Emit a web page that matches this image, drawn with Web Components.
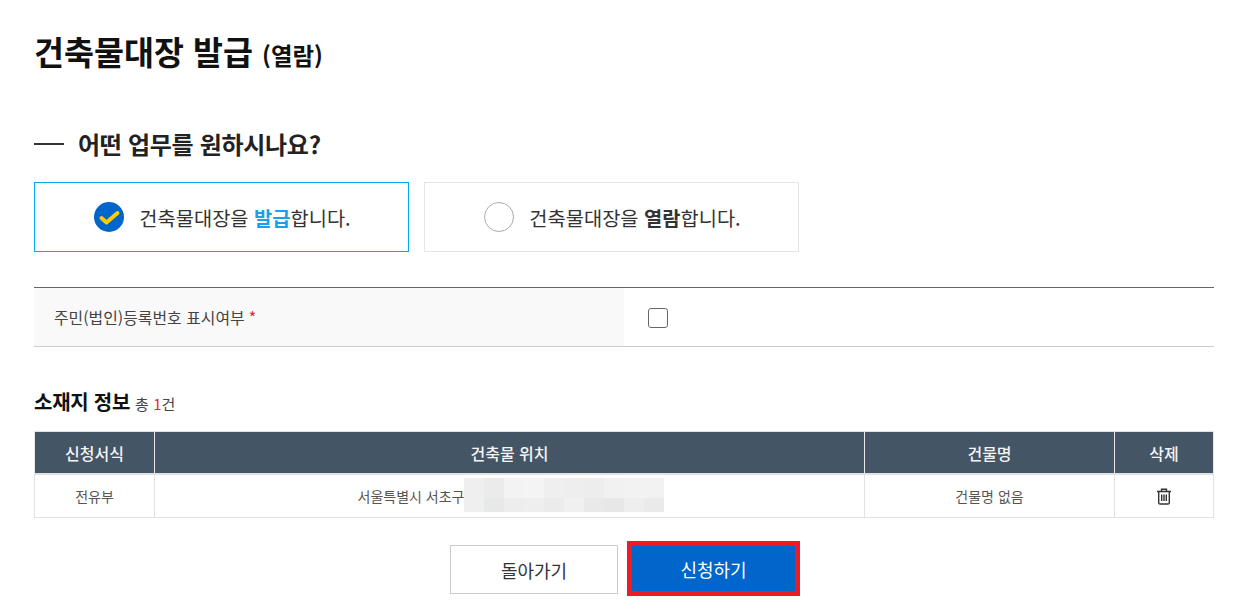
<!DOCTYPE html>
<html lang="ko">
<head>
<meta charset="utf-8">
<title>건축물대장 발급</title>
<style>
  html, body { margin: 0; background: #fff; }
  body {
    font-family: "Noto Sans CJK KR", "Noto Sans", sans-serif;
    color: #222;
  }
</style>
</head>
<body>
<issue-page></issue-page>

<script>
class PageTitle extends HTMLElement {
  constructor() {
    super()
    this.attachShadow({ mode: "open" })
    this.shadowRoot.innerHTML = `
      <style>
        :host { display: block; }
        h1 { margin: 0; font-size: 32.6px; line-height: 46px; font-weight: 700; color: #111; }
        small { font-size: 23.4px; font-weight: 700; }
      </style>
      <h1><slot></slot> <small><slot name="sub"></slot></small></h1>
    `
  }
}

class SectionHead extends HTMLElement {
  constructor() {
    super()
    this.attachShadow({ mode: "open" })
    this.shadowRoot.innerHTML = `
      <style>
        :host { display: flex; align-items: center; gap: 14px; }
        .dash { width: 30px; height: 2px; background: #333; }
        h2 { margin: 0; font-size: 24px; line-height: 34px; font-weight: 700; color: #222; letter-spacing: -.3px; }
      </style>
      <span class="dash"></span>
      <h2><slot></slot></h2>
    `
  }
}

class ChoiceCard extends HTMLElement {
  constructor() {
    super()
    this.attachShadow({ mode: "open" })
  }

  connectedCallback() {
    const checked = this.hasAttribute("checked")
    const mark = checked
      ? `<svg width="30" height="30" viewBox="0 0 30 30"><circle cx="15" cy="15" r="15" fill="#0066cc"/><path d="M7.5 16l5 4.5 11-9.5" fill="none" stroke="#ffcc00" stroke-width="4" stroke-linecap="round" stroke-linejoin="round"/></svg>`
      : `<svg width="30" height="30" viewBox="0 0 30 30"><circle cx="15" cy="15" r="14.5" fill="#fff" stroke="#aaa"/></svg>`
    this.shadowRoot.innerHTML = `
      <style>
        :host {
          display: flex; align-items: center; justify-content: center; gap: 15px;
          box-sizing: border-box; width: 375px; height: 70px; padding-left: 2px;
          border: 1px solid ${checked ? "#00aeef" : "#e5e5e5"};
          font-size: 19.8px; color: #333;
        }
        svg { display: block; }
        ::slotted(b) { font-weight: 700; color: ${checked ? "#1a9fe8" : "#333"}; }
      </style>
      ${mark}
      <span><slot></slot></span>
    `
  }
}

class FormRow extends HTMLElement {
  constructor() {
    super()
    this.attachShadow({ mode: "open" })
    this.shadowRoot.innerHTML = `
      <style>
        :host {
          display: grid; grid-template-columns: 590px 1fr;
          border-top: 1px solid #666; border-bottom: 1px solid #ccc;
          height: 58px;
        }
        .label {
          display: flex; align-items: center; padding-left: 20px;
          background: #f9f9f9; font-size: 15.9px; color: #444;
        }
        .req { color: #e8222e; margin-left: 4px; }
        .value { display: flex; align-items: center; padding: 2px 0 0 24px; }
        .box { box-sizing: border-box; width: 20px; height: 20px; border: 1px solid #666; border-radius: 3px; background: #fff; }
      </style>
      <div class="label"><slot></slot><span class="req">*</span></div>
      <div class="value"><span class="box"></span></div>
    `
  }
}

class SiteTable extends HTMLElement {
  constructor() {
    super()
    this.attachShadow({ mode: "open" })
    const cells = ["#efefef","#ebebeb","#f3f3f3","#f4f4f4","#efefef","#eeeeee","#ededed","#f1f1f1","#f2f2f2","#f2f2f2",
                   "#efefef","#e7e8e8","#ededed","#eeeeee","#ebebeb","#f0f0f0","#e9e9e9","#e7e7e7","#eeeeee","#eaeaea"]
    this.shadowRoot.innerHTML = `
      <style>
        :host { display: block; }
        .head { display: flex; align-items: baseline; gap: 5px; height: 29px; }
        h3 { margin: 0; font-size: 20px; line-height: 29px; font-weight: 700; color: #111; letter-spacing: -.25px; }
        .count { font-size: 15px; color: #444; }
        .count em { font-style: normal; color: #f01c2c; }
        table { border-collapse: collapse; table-layout: fixed; width: 1179px; margin-top: 15px; }
        th, td { border: 1px solid #e2e2e2; text-align: center; padding: 0; }
        th { height: 41px; background: #445566; color: #f4f4f4; font-size: 16px; font-weight: 500; border-right-color: #e8e8e8; border-left-color: #e8e8e8; border-bottom: 2px solid #e2e2e2; }
        td { height: 42px; font-size: 14px; color: #555; }
        td.place { padding-left: 3px; }
        .addr { display: inline-flex; align-items: center; vertical-align: middle; }
        .mask { display: grid; grid-template-columns: repeat(10, 20px); grid-template-rows: 20px 14px; margin-top: -2px; }
        .trash { display: block; margin: 0 auto; }
      </style>
      <div class="head"><h3>소재지 정보</h3><span class="count">총 <em>1</em>건</span></div>
      <table>
        <colgroup><col style="width:120px"><col style="width:710px"><col style="width:250px"><col style="width:99px"></colgroup>
        <thead><tr><th>신청서식</th><th>건축물 위치</th><th>건물명</th><th>삭제</th></tr></thead>
        <tbody><tr>
          <td>전유부</td>
          <td class="place"><span class="addr">서울특별시 서초구<span class="mask">${cells.map(c => `<i style="background:${c}"></i>`).join("")}</span></span></td>
          <td>건물명 없음</td>
          <td>
            <svg class="trash" width="16" height="17" viewBox="0 0 16 17" fill="none" stroke="#333" stroke-width="1.4">
              <path d="M1 3.5h14M5.5 3.5V1.2h5v2.3M2.7 3.5v11.2q0 1.3 1.3 1.3h8q1.3 0 1.3-1.3V3.5"/>
              <path d="M5.7 6.5v6.5M8 6.5v6.5M10.3 6.5v6.5"/>
            </svg>
          </td>
        </tr></tbody>
      </table>
    `
  }
}

class ActionButton extends HTMLElement {
  constructor() {
    super()
    this.attachShadow({ mode: "open" })
  }

  connectedCallback() {
    const primary = this.hasAttribute("primary")
    this.shadowRoot.innerHTML = `
      <style>
        :host {
          display: flex; align-items: center; justify-content: center; box-sizing: border-box;
          width: ${primary ? 173 : 168}px; height: ${primary ? 55 : 49}px;
          font-size: 18px;
          ${primary ? "background:#0066cc;color:#fff;border:5px solid #ed1c24;" : "background:#fff;color:#333;border:1px solid #ccc;margin-top:4px;"}
        }
      </style>
      <slot></slot>
    `
  }
}

class IssuePage extends HTMLElement {
  constructor() {
    super()
    this.attachShadow({ mode: "open" })
    this.shadowRoot.innerHTML = `
      <style>
        :host { display: block; box-sizing: border-box; width: 1253px; height: 611px; padding: 28px 39px 0 34px; overflow: hidden; }
        section-head { margin-top: 49px; }
        .choices { display: flex; gap: 15px; margin-top: 21px; }
        form-row { margin-top: 35px; }
        site-table { margin-top: 40px; }
        .actions { display: flex; justify-content: center; align-items: flex-start; gap: 9px; margin-top: 23px; padding-left: 2px; }
      </style>
      <page-title>건축물대장 발급<span slot="sub">(열람)</span></page-title>
      <section-head>어떤 업무를 원하시나요?</section-head>
      <div class="choices">
        <choice-card checked>건축물대장을 <b>발급</b>합니다.</choice-card>
        <choice-card>건축물대장을 <b>열람</b>합니다.</choice-card>
      </div>
      <form-row>주민(법인)등록번호 표시여부</form-row>
      <site-table></site-table>
      <div class="actions">
        <action-button>돌아가기</action-button>
        <action-button primary>신청하기</action-button>
      </div>
    `
  }
}

customElements.define("page-title", PageTitle)
customElements.define("section-head", SectionHead)
customElements.define("choice-card", ChoiceCard)
customElements.define("form-row", FormRow)
customElements.define("site-table", SiteTable)
customElements.define("action-button", ActionButton)
customElements.define("issue-page", IssuePage)
</script>
</body>
</html>
